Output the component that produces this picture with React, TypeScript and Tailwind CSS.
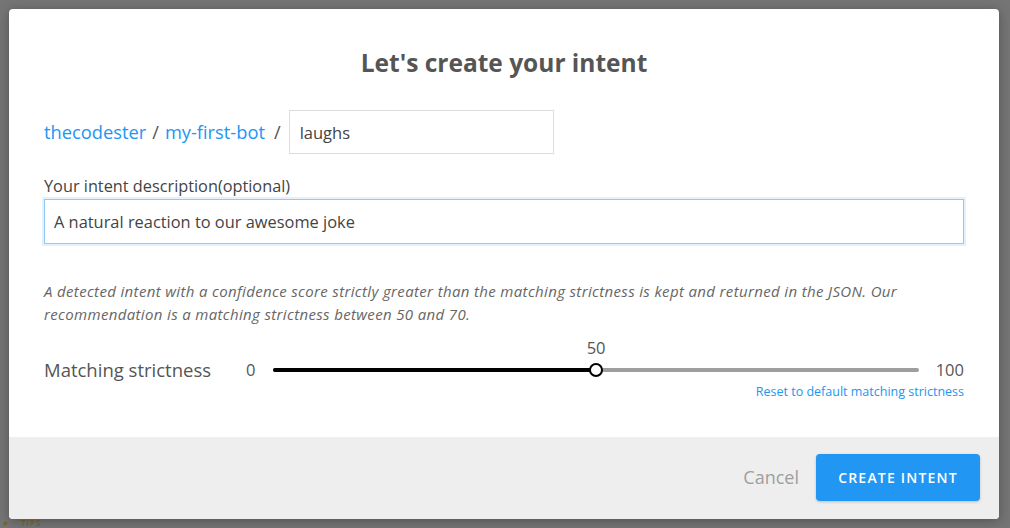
import React, { useState } from 'react';

const font = { fontFamily: '"Open Sans", "Liberation Sans", sans-serif' };

function Slider({ value }: { value: number }) {
  return (
    <div className="relative flex-1 h-[24px] flex items-center">
      <div className="w-full h-[4px] rounded-full bg-[#9e9e9e] flex">
        <div className="h-full rounded-full bg-black" style={{ width: `${value}%` }} />
      </div>
      <div
        className="absolute top-1/2 -translate-x-1/2 -translate-y-1/2 w-[14px] h-[14px] rounded-full bg-white border-2 border-black"
        style={{ left: `${value}%` }}
      />
      <div
        className="absolute -top-[20px] -translate-x-1/2 text-[16.5px] leading-[20px] text-[#555]"
        style={{ left: `${value}%` }}
      >
        {value}
      </div>
    </div>
  );
}

export default function App() {
  const [name, setName] = useState('laughs');
  const [desc, setDesc] = useState('A natural reaction to our awesome joke');

  return (
    <div className="relative w-[1010px] h-[528px] overflow-hidden bg-[#757575]" style={font}>
      {/* dimmed page behind */}
      <div className="absolute left-[2px] bottom-[1px] flex items-center gap-[12px] text-[#7a6626] text-[8px] leading-[8px]">
        <span>★</span>
        <span className="font-semibold tracking-[1px]">TIPS</span>
      </div>

      {/* modal */}
      <div className="absolute left-[9px] top-[9px] w-[990px] h-[510px] bg-white rounded-[4px] overflow-hidden flex flex-col shadow-[0_2px_12px_rgba(0,0,0,0.3)]">
        <div className="flex-1 flex flex-col px-[35px]">
          <h1 className="mt-[38px] text-center text-[24.5px] leading-[32px] font-bold text-[#555]">
            Let's create your intent
          </h1>

          <div className="mt-[31px] flex items-center text-[18.3px] text-[#555]">
            <span className="text-[#2196f3]">thecodester</span>
            <span className="mx-[6px]">/</span>
            <span className="text-[#2196f3]">my-first-bot</span>
            <span className="ml-[9px] mr-[8px]">/</span>
            <input
              value={name}
              onChange={e => setName(e.target.value)}
              className="w-[265px] h-[44px] px-[10px] border border-[#ddd] text-[16.5px] text-[#444] outline-none"
              style={font}
            />
          </div>

          <label className="mt-[20px] block text-[16.3px] leading-[24px] text-[#444]">
            Your intent description(optional)
          </label>
          <input
            value={desc}
            onChange={e => setDesc(e.target.value)}
            className="mt-[1px] w-full h-[45px] px-[9px] border border-[#90caf9] shadow-[0_0_0_2px_#e3f2fd] text-[16.4px] text-[#444] outline-none"
            style={font}
          />

          <p className="mt-[36px] text-[15px] leading-[23px] tracking-[0.35px] italic text-[#666]">
            A detected intent with a confidence score strictly greater than the matching strictness is kept and returned in the JSON. Our recommendation is a matching strictness between 50 and 70.
          </p>

          <div className="mt-[32px] flex items-center h-[24px]">
            <span className="w-[202px] text-[18.5px] text-[#555]">Matching strictness</span>
            <span className="text-[16.5px] text-[#555] mr-[18px]">0</span>
            <Slider value={50} />
            <span className="text-[16.5px] text-[#555] ml-[17px]">100</span>
          </div>
          <div className="mt-[2px] flex justify-end">
            <a className="text-[12.5px] leading-[16px] text-[#2196f3] cursor-pointer">
              Reset to default matching strictness
            </a>
          </div>
        </div>

        <div className="h-[82px] bg-[#eee] flex items-center justify-end pr-[19px]">
          <button className="mr-[17px] mb-[1px] text-[18px] text-[#9e9e9e]" style={font}>Cancel</button>
          <button
            className="w-[164px] h-[47px] mb-[1px] rounded-[4px] bg-[#2196f3] text-white text-[14px] font-semibold tracking-[1.2px] shadow-[0_1px_3px_rgba(0,0,0,0.2)]"
            style={font}
          >
            CREATE INTENT
          </button>
        </div>
      </div>
    </div>
  );
}
